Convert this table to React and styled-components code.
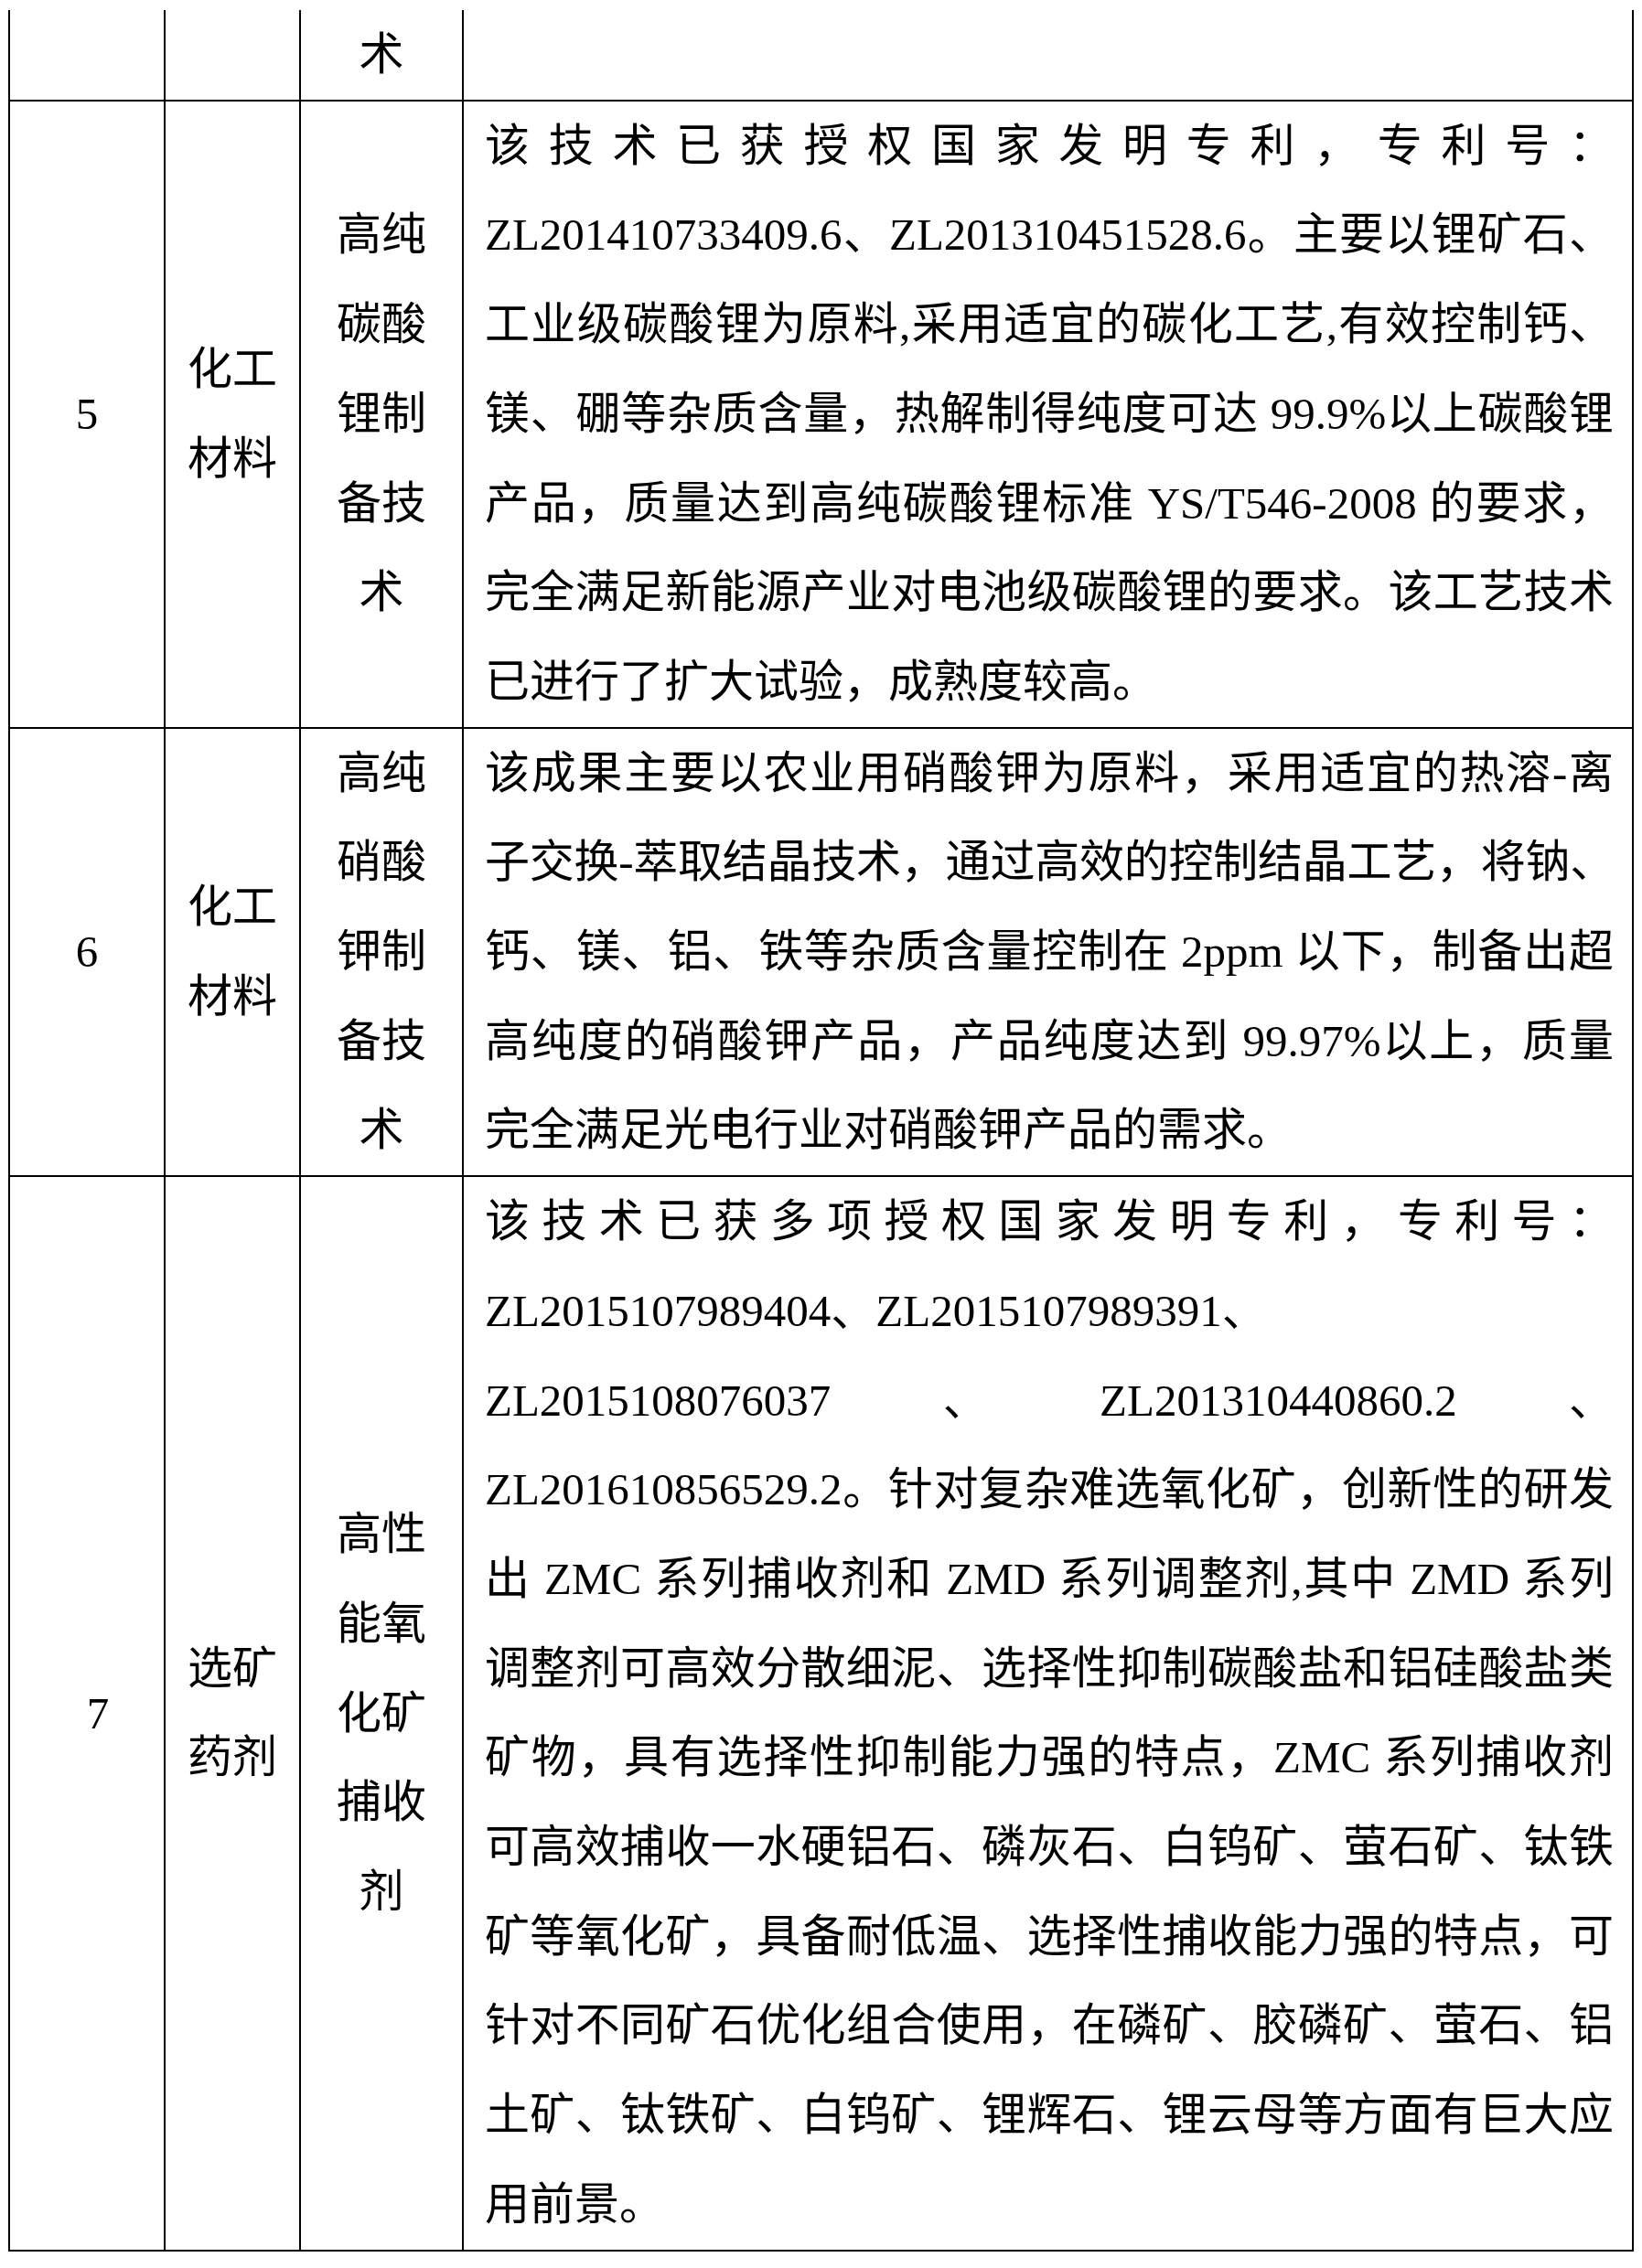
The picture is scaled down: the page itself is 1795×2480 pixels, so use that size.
import React from 'react';
import styled, { createGlobalStyle } from 'styled-components';

const rows = [
  {
    no: '',
    type: [],
    name: ['术'],
    desc: [],
    open: true,
  },
  {
    no: '5',
    type: ['化工', '材料'],
    name: ['高纯', '碳酸', '锂制', '备技', '术'],
    desc: [
      '该技术已获授权国家发明专利，专利号：',
      'ZL201410733409.6、ZL201310451528.6。主要以锂矿石、',
      '工业级碳酸锂为原料,采用适宜的碳化工艺,有效控制钙、',
      '镁、硼等杂质含量，热解制得纯度可达 99.9%以上碳酸锂',
      '产品，质量达到高纯碳酸锂标准 YS/T546-2008 的要求，',
      '完全满足新能源产业对电池级碳酸锂的要求。该工艺技术',
      '已进行了扩大试验，成熟度较高。',
    ],
  },
  {
    no: '6',
    type: ['化工', '材料'],
    name: ['高纯', '硝酸', '钾制', '备技', '术'],
    desc: [
      '该成果主要以农业用硝酸钾为原料，采用适宜的热溶-离',
      { text: '子交换-萃取结晶技术，通过高效的控制结晶工艺，将钠、', tight: true },
      '钙、镁、铝、铁等杂质含量控制在 2ppm 以下，制备出超',
      '高纯度的硝酸钾产品，产品纯度达到 99.97%以上，质量',
      '完全满足光电行业对硝酸钾产品的需求。',
    ],
  },
  {
    no: '7',
    shift: true,
    type: ['选矿', '药剂'],
    name: ['高性', '能氧', '化矿', '捕收', '剂'],
    desc: [
      '该技术已获多项授权国家发明专利，专利号：',
      { text: 'ZL2015107989404、ZL2015107989391、', plain: true },
      'ZL2015108076037、ZL201310440860.2、',
      'ZL201610856529.2。针对复杂难选氧化矿，创新性的研发',
      '出 ZMC 系列捕收剂和 ZMD 系列调整剂,其中 ZMD 系列',
      '调整剂可高效分散细泥、选择性抑制碳酸盐和铝硅酸盐类',
      '矿物，具有选择性抑制能力强的特点，ZMC 系列捕收剂',
      '可高效捕收一水硬铝石、磷灰石、白钨矿、萤石矿、钛铁',
      '矿等氧化矿，具备耐低温、选择性捕收能力强的特点，可',
      '针对不同矿石优化组合使用，在磷矿、胶磷矿、萤石、铝',
      '土矿、钛铁矿、白钨矿、锂辉石、锂云母等方面有巨大应',
      '用前景。',
    ],
  },
];

const Global = createGlobalStyle`
  html, body {
    margin: 0;
    background: #fff;
  }
  body {
    font-family: "Liberation Serif", "Noto Sans CJK SC", serif;
    color: #000;
  }
`;

const Page = styled.div`
  width: 1795px;
  padding: 11px 0 0 9px;
  box-sizing: border-box;
`;

const Sheet = styled.table`
  border-collapse: collapse;
  table-layout: fixed;
  width: 1777px;
  font-size: 49px;
  line-height: 97.7px;
`;

const Cell = styled.td`
  border: 2px solid #000;
  border-top: ${p => (p.$open ? 'none' : '2px solid #000')};
  vertical-align: middle;
  text-align: center;
  padding: 0 0 0 ${p => (p.$shift ? '24px' : '0')};
`;

const TextCell = styled(Cell)`
  text-align: left;
  padding: 0 20px 0 23px;
`;

const Line = styled.div`
  text-align: ${p => (p.$spread ? 'justify' : 'left')};
  text-align-last: ${p => (p.$spread ? 'justify' : 'left')};
  letter-spacing: ${p => (p.$tight ? '-1.2px' : 'normal')};
`;

const Stack = ({ lines }) => lines.map((l, i) => <div key={i}>{l}</div>);

export default function App() {
  return (
    <Page>
      <Global />
      <Sheet>
        <colgroup>
          <col style={{ width: 170 }} />
          <col style={{ width: 148 }} />
          <col style={{ width: 178 }} />
          <col />
        </colgroup>
        <tbody>
          {rows.map((r, i) => (
            <tr key={i}>
              <Cell $open={r.open} $shift={r.shift}>{r.no}</Cell>
              <Cell $open={r.open}><Stack lines={r.type} /></Cell>
              <Cell $open={r.open}><Stack lines={r.name} /></Cell>
              <TextCell $open={r.open}>
                {r.desc.map((d, j) => {
                  const item = typeof d === 'string' ? { text: d } : d;
                  const last = j === r.desc.length - 1;
                  return (
                    <Line key={j} $spread={!last && !item.plain} $tight={item.tight}>
                      {item.text}
                    </Line>
                  );
                })}
              </TextCell>
            </tr>
          ))}
        </tbody>
      </Sheet>
    </Page>
  );
}
